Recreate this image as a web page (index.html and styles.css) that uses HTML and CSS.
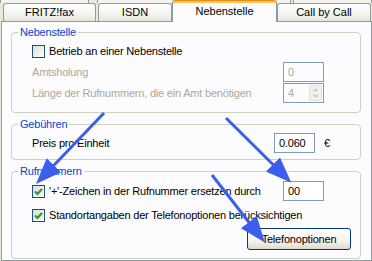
FILE: index.html
```html
<!DOCTYPE html>
<html lang="de">
<head>
    <meta charset="UTF-8">
    <title>Nebenstelle</title>
    <link rel="stylesheet" href="styles.css">
</head>
<body>
    <div class="dialog">
        <div class="tabs-back">
            <span class="back-tab back-tab-1"></span>
            <span class="back-tab back-tab-2"></span>
            <span class="back-tab back-tab-3"></span>
        </div>
        <div class="tabs">
            <div class="tab tab-fax">FRITZ!fax</div>
            <div class="tab tab-isdn">ISDN</div>
            <div class="tab tab-active">Nebenstelle</div>
            <div class="tab tab-cbc">Call by Call</div>
        </div>

        <div class="page">
            <fieldset class="group group-neben">
                <legend>Nebenstelle</legend>
                <div class="row">
                    <span class="checkbox"></span>
                    <span class="label">Betrieb an einer Nebenstelle</span>
                </div>
                <div class="row disabled">
                    <span class="label">Amtsholung</span>
                    <span class="field">0</span>
                </div>
                <div class="row disabled">
                    <span class="label">Länge der Rufnummern, die ein Amt benötigen</span>
                    <span class="field field-spin">4
                        <span class="spin">
                            <svg width="13" height="16" viewBox="0 0 13 16">
                                <path d="M4 6 L6.5 3.5 L9 6" fill="none" stroke="#c4c2b4" stroke-width="1.5"/>
                                <path d="M4 10 L6.5 12.5 L9 10" fill="none" stroke="#c4c2b4" stroke-width="1.5"/>
                            </svg>
                        </span>
                    </span>
                </div>
            </fieldset>

            <fieldset class="group group-fee">
                <legend>Gebühren</legend>
                <div class="row">
                    <span class="label">Preis pro Einheit</span>
                    <span class="field">0.060</span>
                    <span class="unit">€</span>
                </div>
            </fieldset>

            <fieldset class="group group-nums">
                <legend>Rufnummern</legend>
                <div class="row">
                    <span class="checkbox checked">
                        <svg width="11" height="11" viewBox="0 0 11 11"><path d="M2 5.5 L4.5 8 L9 3" fill="none" stroke="#21a121" stroke-width="2.2"/></svg>
                    </span>
                    <span class="label">'+'-Zeichen in der Rufnummer ersetzen durch</span>
                    <span class="field">00</span>
                </div>
                <div class="row">
                    <span class="checkbox checked">
                        <svg width="11" height="11" viewBox="0 0 11 11"><path d="M2 5.5 L4.5 8 L9 3" fill="none" stroke="#21a121" stroke-width="2.2"/></svg>
                    </span>
                    <span class="label">Standortangaben der Telefonoptionen berücksichtigen</span>
                </div>
                <div class="button-row">
                    <button class="btn">Telefonoptionen</button>
                </div>
            </fieldset>
        </div>

        <!-- hint arrows drawn over the dialog -->
        <svg class="arrows" width="372" height="261" viewBox="0 0 372 261">
            <defs>
                <marker id="head" markerUnits="userSpaceOnUse" markerWidth="27" markerHeight="22" refX="10" refY="10" orient="auto">
                    <path d="M0 0 L26 10 L0 20 Z" fill="#3b5fec"/>
                </marker>
            </defs>
            <line x1="104" y1="113" x2="47" y2="172.5" stroke="#3b5fec" stroke-width="3" marker-end="url(#head)"/>
            <line x1="226" y1="118" x2="280" y2="171.5" stroke="#3b5fec" stroke-width="3" marker-end="url(#head)"/>
            <line x1="212" y1="175" x2="255" y2="230" stroke="#3b5fec" stroke-width="3" marker-end="url(#head)"/>
        </svg>
    </div>
</body>
</html>
```

FILE: styles.css
```css
:root {
    --tab-border: #919b9c;
    --group-border: #d0d0bf;
    --group-title: #0046d5;
    --page-bg: #fcfcfe;
    --disabled-text: #aca899;
    --field-border: #7f9db9;
}

body {
    margin: 0;
    background-color: #ece9d8;
    font-family: "Liberation Sans", Arial, sans-serif;
    font-size: 11px;
    letter-spacing: -0.2px;
    color: #000;
    overflow: hidden;
}

.dialog {
    position: relative;
    width: 372px;
    height: 261px;
    overflow: hidden;
}

/* second tab row, only the bottom edge peeks out */
.tabs-back {
    display: flex;
    height: 3px;
}

.back-tab {
    box-sizing: border-box;
    border-left: 1px solid var(--tab-border);
    border-right: 1px solid var(--tab-border);
    background-color: #f4f3ee;
}

.back-tab-1 { width: 89px; }
.back-tab-2 { width: 196px; margin-left: 8px; }
.back-tab-3 { width: 79px; margin-left: 2px; }

.tabs {
    display: flex;
    align-items: flex-end;
    height: 18px;
    padding-left: 3px;
    position: relative;
    z-index: 1;
}

.tab {
    box-sizing: border-box;
    height: 18px;
    border: 1px solid var(--tab-border);
    border-bottom: none;
    border-radius: 3px 3px 0 0;
    background: linear-gradient(#ffffff, #f3f3ef 60%, #e6e4dc);
    text-align: center;
    line-height: 17px;
    letter-spacing: 0;
}

.tab-fax { width: 93px; margin-right: 2px; }
.tab-isdn { width: 74px; }
.tab-cbc { width: 94px; }

.tab-active {
    width: 105px;
    height: 22px;
    margin-bottom: -1px;
    border-top: 1px solid #e68b2c;
    box-shadow: inset 0 2px 0 #ffc83c;
    background: var(--page-bg);
    line-height: 20px;
}

.page {
    box-sizing: border-box;
    margin-left: 1px;
    height: 240px;
    border: 1px solid var(--tab-border);
    background-color: var(--page-bg);
    padding-left: 9px;
}

.group {
    box-sizing: border-box;
    width: 350px;
    margin: 5px 0 0 0;
    padding: 2px 8px 8px 6px;
    border: 1px solid var(--group-border);
    border-radius: 4px;
    min-width: 0;
}

.group legend {
    padding: 0 2px;
    color: var(--group-title);
    line-height: 13px;
}

.group-neben {
    margin-top: 4px;
    padding-bottom: 9px;
}

.group-fee {
    padding-bottom: 6px;
}

.group-nums {
    padding-top: 3px;
}

.row {
    display: flex;
    align-items: center;
    height: 20px;
    margin-left: 14px;
    padding-right: 28px;
}

.group-neben .row + .row {
    margin-top: 1px;
}

.group-nums .row + .row {
    margin-top: 4px;
}

.row .label {
    flex: 1;
    white-space: nowrap;
}

.row.disabled {
    color: var(--disabled-text);
}

.checkbox {
    box-sizing: border-box;
    width: 13px;
    height: 13px;
    margin-right: 4px;
    border: 1px solid #1c5180;
    background: linear-gradient(135deg, #dcdcd7, #ffffff);
    display: flex;
    align-items: center;
    justify-content: center;
}

.field {
    box-sizing: border-box;
    position: relative;
    width: 41px;
    height: 20px;
    padding-left: 4px;
    border: 1px solid var(--field-border);
    background-color: #fff;
    line-height: 18px;
}

.row.disabled .field {
    background-color: var(--page-bg);
}

.spin {
    position: absolute;
    top: 1px;
    right: 1px;
    width: 13px;
    height: 16px;
    border-radius: 2px;
    background-color: #f3f2ea;
    border: 1px solid #e4e2d6;
    box-sizing: border-box;
    display: flex;
    align-items: center;
    justify-content: center;
}

.spin svg {
    display: block;
}

.unit {
    width: 0;
    margin-left: 9px;
    white-space: nowrap;
}

.button-row {
    display: flex;
    justify-content: flex-end;
    margin-top: 3px;
}

.btn {
    width: 104px;
    height: 22px;
    margin-right: 1px;
    padding: 0;
    border: 1px solid #003c74;
    border-radius: 3px;
    background: linear-gradient(#ffffff, #f4f3ee 60%, #dedbcd);
    font-family: inherit;
    font-size: 11px;
    letter-spacing: inherit;
    color: #000;
}

.arrows {
    position: absolute;
    top: 0;
    left: 0;
    pointer-events: none;
}
```
